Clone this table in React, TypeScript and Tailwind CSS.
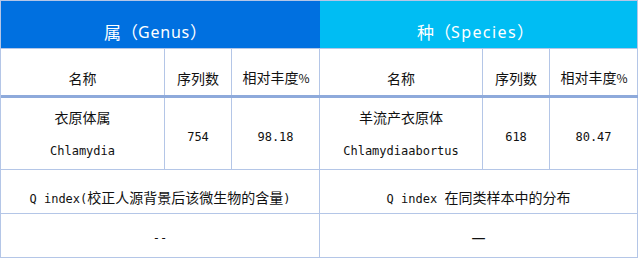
import React from 'react';

const mono = "font-['DejaVu_Sans_Mono','Noto_Sans_CJK_SC',monospace] text-[12px]";
const cjk = "font-['Noto_Sans_CJK_SC',sans-serif] text-[14px]";

function Zh({ children }: { children: React.ReactNode }) {
  return <span className={cjk}>{children}</span>;
}

function Lt({ children }: { children: React.ReactNode }) {
  return <span className={`${mono} whitespace-pre`}>{children}</span>;
}

const cols = ['w-[164px]', 'w-[67px]', 'w-[88px]', 'w-[163px]', 'w-[67px]', 'w-[88px]'];

export default function App() {
  return (
    <div className="w-[641px] h-[261px] bg-white">
      <div className="w-[638px] border-l border-t border-[#b4c6e7] text-[#111] leading-[20px]">
        {/* top banner */}
        <div className="flex h-[48px] border-b border-[#b4c6e7]">
          <div className="w-[319px] bg-[#0070e0] flex justify-center items-center pt-[14px] pr-[10px] text-white font-['Noto_Sans_CJK_SC',sans-serif] text-[17px]">
            属（<span className="font-['Noto_Sans',sans-serif] text-[16px] tracking-[0.8px]">Genus</span>）
          </div>
          <div className="w-[318px] bg-[#00bdf3] border-r border-[#b4c6e7] flex justify-center items-center pt-[14px] pr-[6px] text-white font-['Noto_Sans_CJK_SC',sans-serif] text-[17px]">
            种（<span className="font-['Noto_Sans',sans-serif] text-[16px] tracking-[1.4px]">Species</span>）
          </div>
        </div>

        {/* column titles */}
        <div className="flex h-[49px] border-b-[3px] border-[#8eaadb]">
          {[0, 1, 2, 3, 4, 5].map((i) => (
            <div key={i} className={`${cols[i]} h-full border-r border-[#b4c6e7] flex justify-center items-center pt-[11px]`}>
              {i % 3 === 0 && <Zh>名称</Zh>}
              {i % 3 === 1 && <Zh>序列数</Zh>}
              {i % 3 === 2 && (
                <span>
                  <Zh>相对丰度</Zh>
                  <span className="font-['Noto_Sans_CJK_SC',sans-serif] text-[12px] tracking-[-1px]">%</span>
                </span>
              )}
            </div>
          ))}
        </div>

        {/* data */}
        <div className="flex h-[72px] border-b border-[#b4c6e7]">
          <div className={`${cols[0]} h-full border-r border-[#b4c6e7] flex flex-col items-center pt-[9px] gap-[14px]`}>
            <Zh>衣原体属</Zh>
            <Lt>Chlamydia</Lt>
          </div>
          <div className={`${cols[1]} h-full border-r border-[#b4c6e7] flex justify-center pt-[29px]`}>
            <Lt>754</Lt>
          </div>
          <div className={`${cols[2]} h-full border-r border-[#b4c6e7] flex justify-center pt-[29px]`}>
            <Lt>98.18</Lt>
          </div>
          <div className={`${cols[3]} h-full border-r border-[#b4c6e7] flex flex-col items-center pt-[9px] gap-[14px]`}>
            <Zh>羊流产衣原体</Zh>
            <Lt>Chlamydiaabortus</Lt>
          </div>
          <div className={`${cols[4]} h-full border-r border-[#b4c6e7] flex justify-center pt-[29px]`}>
            <Lt>618</Lt>
          </div>
          <div className={`${cols[5]} h-full border-r border-[#b4c6e7] flex justify-center pt-[29px]`}>
            <Lt>80.47</Lt>
          </div>
        </div>

        {/* Q index captions */}
        <div className="flex h-[44px] border-b border-[#b4c6e7]">
          <div className="w-[319px] h-full border-r border-[#b4c6e7] flex justify-center items-center pt-[12px]">
            <span>
              <Lt>Q index(</Lt>
              <Zh>校正人源背景后该微生物的含量</Zh>
              <Lt>)</Lt>
            </span>
          </div>
          <div className="w-[318px] h-full border-r border-[#b4c6e7] flex justify-center items-center pt-[12px]">
            <span>
              <Lt>Q index </Lt>
              <Zh>在同类样本中的分布</Zh>
            </span>
          </div>
        </div>

        {/* Q index values */}
        <div className="flex h-[44px] border-b border-[#b4c6e7]">
          <div className="w-[319px] h-full border-r border-[#b4c6e7] flex justify-center items-center pt-[4px]">
            <Lt>--</Lt>
          </div>
          <div className="w-[318px] h-full border-r border-[#b4c6e7] flex justify-center items-center pt-[4px]">
            <Zh>一</Zh>
          </div>
        </div>
      </div>
    </div>
  );
}
